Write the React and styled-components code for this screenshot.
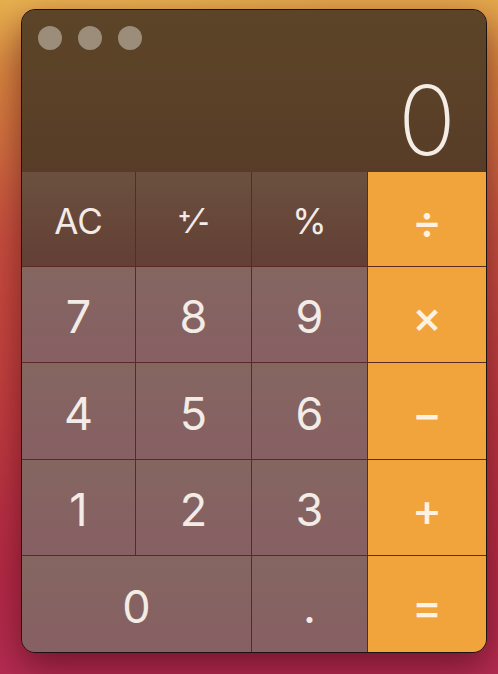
import React from 'react';
import styled, { createGlobalStyle } from 'styled-components';

const GlobalStyle = createGlobalStyle`
  html, body {
    margin: 0;
    padding: 0;
    height: 100%;
  }
  body {
    width: 498px;
    height: 674px;
    overflow: hidden;
    font-family: "Inter", "Liberation Sans", sans-serif;
    background:
      radial-gradient(ellipse 90px 260px at -10px 330px, rgba(200, 70, 60, 0.55), transparent 70%),
      radial-gradient(ellipse 360px 160px at 20% -40px, rgba(236, 186, 84, 0.9), transparent 70%),
      linear-gradient(180deg, #e4a84c 0%, #d8843f 12%, #c9543f 35%, #bf3a40 60%, #b52a46 85%, #b42c52 100%);
  }
`;

const Desk = styled.div`
  padding: 9px 0 0 21px;
`;

const Window = styled.div`
  width: 464px;
  height: 642px;
  border: 1px solid #1c1210;
  border-radius: 14px;
  overflow: hidden;
  display: flex;
  flex-direction: column;
  box-shadow:
    0 14px 36px rgba(70, 8, 20, 0.6),
    inset 0 0 0 1px rgba(255, 255, 255, 0.18);
  background: #5c2a24;
`;

const Display = styled.div`
  height: 162px;
  flex-shrink: 0;
  background: linear-gradient(180deg, #5c4428 0%, #5a4127 55%, #583c28 100%);
  display: flex;
  flex-direction: column;
  justify-content: space-between;
  padding: 16px 30px 0 16px;
  box-sizing: border-box;
`;

const Lights = styled.div`
  display: flex;
  gap: 16px;
`;

const Light = styled.span`
  width: 24px;
  height: 24px;
  border-radius: 50%;
  background: #9b8d7a;
`;

const Readout = styled.div`
  text-align: right;
  color: #f4ede6;
  font-family: "Inter", "Liberation Sans", sans-serif;
  font-weight: 200;
  font-size: 96px;
  line-height: 96px;
  margin-bottom: 4px;
`;

const Pad = styled.div`
  flex: 1;
  display: grid;
  grid-template-columns: 113px 115px 115px 1fr;
  grid-template-rows: 94px 95px 96px 95px 1fr;
  gap: 1px;
  background: #5c2a24;
`;

const shades = {
  fn: 'linear-gradient(180deg, #6b503f 0%, #633f35 100%)',
  num: 'linear-gradient(180deg, #846660 0%, #875f64 100%)',
  op: '#f2a43c',
};

const Key = styled.button`
  border: 0;
  margin: 0;
  padding: 4px 0 0;
  grid-column: ${p => (p.$wide ? 'span 2' : 'auto')};
  background: ${p => shades[p.$kind]};
  color: ${p => (p.$kind === 'op' ? '#fdf1e2' : '#f2ebe6')};
  font-family: "Inter", "Liberation Sans", sans-serif;
  font-size: ${p => (p.$kind === 'fn' ? '35px' : '45px')};
  font-weight: ${p => (p.$kind === 'op' ? 500 : 400)};
  display: flex;
  align-items: center;
  justify-content: center;
`;

const PlusMinus = styled.span`
  display: inline-flex;
  height: 28px;
  line-height: 1;
`;

const Sup = styled.span`
  align-self: flex-start;
  font-size: 20px;
  font-weight: 700;
  margin-top: -2px;
`;

const Slash = styled.span`
  align-self: center;
  font-size: 34px;
  font-weight: 400;
`;

const Sub = styled.span`
  align-self: flex-end;
  font-size: 24px;
  font-weight: 700;
`;

const rows = [
  ['7', '8', '9', '×'],
  ['4', '5', '6', '−'],
  ['1', '2', '3', '+'],
];

export default function App() {
  return (
    <>
      <GlobalStyle />
      <Desk>
        <Window>
          <Display>
            <Lights>
              <Light />
              <Light />
              <Light />
            </Lights>
            <Readout>0</Readout>
          </Display>
          <Pad>
            <Key $kind="fn">AC</Key>
            <Key $kind="fn">
              <PlusMinus>
                <Sup>+</Sup>
                <Slash>⁄</Slash>
                <Sub>-</Sub>
              </PlusMinus>
            </Key>
            <Key $kind="fn">%</Key>
            <Key $kind="op">÷</Key>
            {rows.map(row =>
              row.map((label, i) => (
                <Key key={label} $kind={i === 3 ? 'op' : 'num'}>
                  {label}
                </Key>
              ))
            )}
            <Key $kind="num" $wide>0</Key>
            <Key $kind="num">.</Key>
            <Key $kind="op">=</Key>
          </Pad>
        </Window>
      </Desk>
    </>
  );
}
